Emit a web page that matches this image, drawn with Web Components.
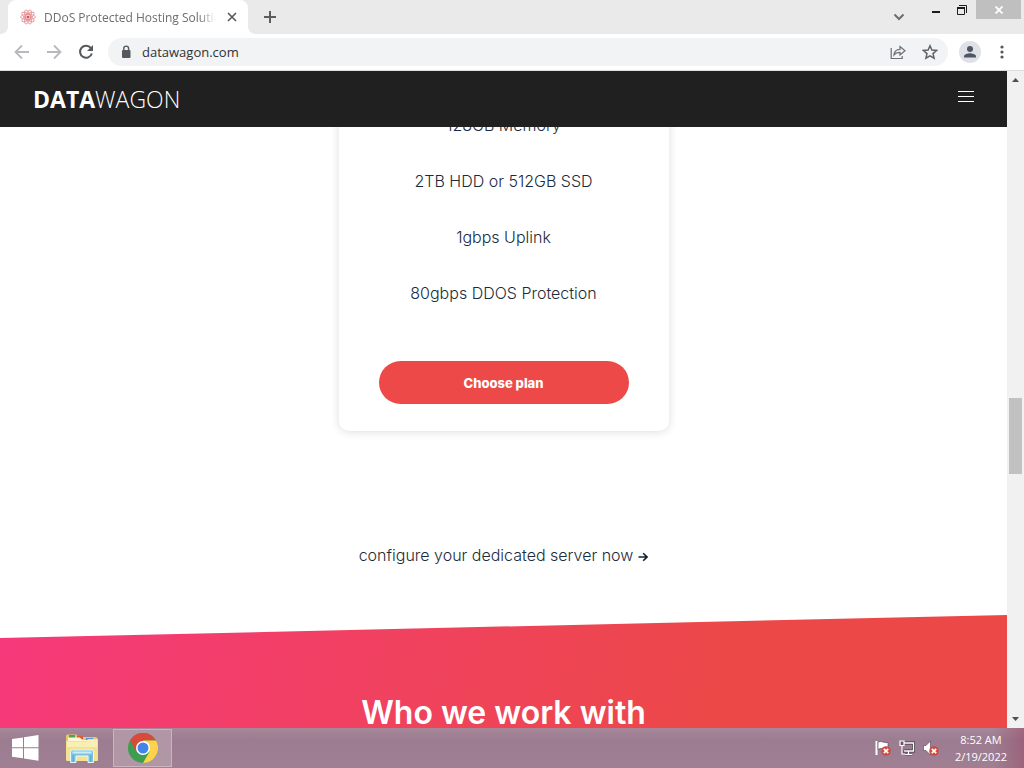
<!DOCTYPE html>
<html lang="en">
<head>
<meta charset="utf-8">
<meta name="viewport" content="width=device-width, initial-scale=1">
<title>DDoS Protected Hosting Solutions</title>
<style>
    body {
        margin: 0;
        height: 100vh;
        overflow: hidden;
        font-family: "Open Sans", "Noto Sans", sans-serif;
    }
</style>
</head>
<body>
<desktop-screen>
    <tab-strip>DDoS Protected Hosting Solutions</tab-strip>
    <address-bar url="datawagon.com"></address-bar>
    <web-page>
        <site-header slot="header"><b>DATA</b>WAGON</site-header>
        <plan-card>
            <span>128GB Memory</span>
            <span>2TB HDD or 512GB SSD</span>
            <span>1gbps Uplink</span>
            <span>80gbps DDOS Protection</span>
        </plan-card>
        <arrow-link>configure your dedicated server now</arrow-link>
        <slant-section>Who we work with</slant-section>
    </web-page>
    <task-bar></task-bar>
</desktop-screen>

<script>
class DesktopScreen extends HTMLElement {
    constructor() {
        super();
        this.attachShadow({ mode: 'open' });

        this.shadowRoot.innerHTML = `
              <style>
                    :host {
                        display: flex;
                        flex-direction: column;
                        height: 100%;
                        background-color: #ffffff;
                    }
              </style>
              <slot></slot>
        `;
    }
}

class TabStrip extends HTMLElement {
    constructor() {
        super();
        this.attachShadow({ mode: 'open' });

        this.shadowRoot.innerHTML = `
              <style>
                    :host {
                        display: flex;
                        align-items: flex-start;
                        flex: none;
                        height: 34px;
                        padding: 0 3px 0 8px;
                        background-color: #eaeaea;
                    }

                    button {
                        display: flex;
                        align-items: center;
                        justify-content: center;
                        padding: 0;
                        border: 0;
                        background: none;
                    }

                    .tab {
                        position: relative;
                        display: flex;
                        align-items: center;
                        gap: 8px;
                        box-sizing: border-box;
                        width: 240px;
                        height: 34px;
                        padding: 0 8px 0 12px;
                        border-radius: 8px 8px 0 0;
                        background-color: #ffffff;
                    }

                    /* the curved feet of the active tab */
                    .tab::before, .tab::after {
                        content: "";
                        position: absolute;
                        bottom: 0;
                        width: 8px;
                        height: 8px;
                    }

                    .tab::before {
                        left: -8px;
                        background: radial-gradient(circle at 0 0, transparent 8px, #ffffff 8px);
                    }

                    .tab::after {
                        right: -8px;
                        background: radial-gradient(circle at 100% 0, transparent 8px, #ffffff 8px);
                    }

                    .title {
                        flex: 1;
                        overflow: hidden;
                        white-space: nowrap;
                        font-size: 12px;
                        color: #6b6e72;
                        -webkit-mask-image: linear-gradient(to right, #000 90%, transparent);
                        mask-image: linear-gradient(to right, #000 90%, transparent);
                    }

                    .new {
                        width: 28px;
                        height: 34px;
                        margin-left: 8px;
                        margin-right: auto;
                    }

                    .search {
                        width: 28px;
                        height: 34px;
                        margin-right: 11px;
                    }

                    .minimize {
                        width: 24px;
                        height: 24px;
                    }

                    .restore {
                        width: 28px;
                        height: 19px;
                    }

                    .close {
                        width: 45px;
                        height: 19px;
                        background-color: #bfbfbf;
                    }
              </style>
              <div class="tab">
                <svg width="16" height="16" viewBox="0 0 16 16" fill="none" stroke="#e28a8f" stroke-width="0.8">
                  <ellipse cx="8" cy="8" rx="7.4" ry="2.6"/>
                  <ellipse cx="8" cy="8" rx="7.4" ry="2.6" transform="rotate(36 8 8)"/>
                  <ellipse cx="8" cy="8" rx="7.4" ry="2.6" transform="rotate(72 8 8)"/>
                  <ellipse cx="8" cy="8" rx="7.4" ry="2.6" transform="rotate(108 8 8)"/>
                  <ellipse cx="8" cy="8" rx="7.4" ry="2.6" transform="rotate(144 8 8)"/>
                  <circle cx="8" cy="8" r="1.6" fill="#d9505a" stroke="none"/>
                </svg>
                <span class="title"><slot></slot></span>
                <button aria-label="Close tab">
                  <svg width="16" height="16" viewBox="0 0 16 16" stroke="#54575b" stroke-width="1.6"><path d="M4 4l8 8M12 4l-8 8"/></svg>
                </button>
              </div>
              <button class="new" aria-label="New tab">
                <svg width="14" height="14" viewBox="0 0 14 14" stroke="#5a5d61" stroke-width="2"><path d="M7 1v12M1 7h12"/></svg>
              </button>
              <button class="search" aria-label="Search tabs">
                <svg width="12" height="12" viewBox="0 0 12 12" fill="none" stroke="#6b6e72" stroke-width="2"><path d="M1.500 3.500L6 8l4.500-4.500"/></svg>
              </button>
              <button class="minimize" aria-label="Minimize">
                <svg width="8" height="2"><rect width="8" height="2" fill="#1d1d1d"/></svg>
              </button>
              <button class="restore" aria-label="Restore">
                <svg width="10" height="10" viewBox="0 0 10 10" fill="none" stroke="#1d1d1d"><path d="M2 .5h7.500V8"/><path d="M.5 3h7v6.500h-7z"/><path d="M0 3h8" stroke-width="2"/></svg>
              </button>
              <button class="close" aria-label="Close">
                <svg width="8" height="8" viewBox="0 0 8 8" stroke="#ffffff" stroke-width="1.800"><path d="M.5 .5l7 7M7.500 .5l-7 7"/></svg>
              </button>
        `;
    }
}

class AddressBar extends HTMLElement {
    constructor() {
        super();
        this.attachShadow({ mode: 'open' });

        this.shadowRoot.innerHTML = `
              <style>
                    :host {
                        display: flex;
                        align-items: center;
                        gap: 4px;
                        flex: none;
                        box-sizing: border-box;
                        height: 37px;
                        padding: 0 8px;
                        border-bottom: 1px solid #dcdddf;
                        background-color: #ffffff;
                    }

                    button {
                        display: flex;
                        align-items: center;
                        justify-content: center;
                        width: 28px;
                        height: 28px;
                        padding: 0;
                        border: 0;
                        background: none;
                    }

                    .box {
                        display: flex;
                        align-items: center;
                        flex: 1;
                        height: 28px;
                        margin: 0 4px;
                        padding: 0 4px 0 10px;
                        gap: 4px;
                        border-radius: 14px;
                        background-color: #f1f3f4;
                    }

                    input {
                        flex: 1;
                        min-width: 0;
                        padding: 0 4px;
                        border: 0;
                        outline: 0;
                        background: none;
                        font: 13px "Open Sans", "Noto Sans", sans-serif;
                        color: #303236;
                    }
              </style>
              <button aria-label="Back">
                <svg width="16" height="16" viewBox="0 0 16 16" fill="none" stroke="#b7b9bc" stroke-width="1.800"><path d="M15 8H2M8 1.500L1.500 8 8 14.500"/></svg>
              </button>
              <button aria-label="Forward">
                <svg width="16" height="16" viewBox="0 0 16 16" fill="none" stroke="#b7b9bc" stroke-width="1.800"><path d="M1 8h13M8 1.500L14.500 8 8 14.500"/></svg>
              </button>
              <button aria-label="Reload">
                <svg width="16" height="16" viewBox="0 0 16 16" fill="none" stroke="#55585d" stroke-width="2"><path d="M12.900 4.200A6 6 0 1 0 13.800 9.500"/><path d="M15 1v6H9z" fill="#55585d" stroke="none"/></svg>
              </button>
              <div class="box">
                <svg width="16" height="16" viewBox="0 0 16 16"><rect x="4" y="6" width="8.500" height="8" rx="1" fill="#55585d"/><path d="M5.800 6.500V4.500a2.400 2.400 0 0 1 4.800 0v2" fill="none" stroke="#55585d" stroke-width="1.400"/></svg>
                <input type="text" aria-label="Address">
                <button aria-label="Share">
                  <svg width="16" height="16" viewBox="0 0 16 16" fill="none" stroke="#6b6e72" stroke-width="1.200"><path d="M1.200 4v10.500h11V12"/><path d="M4 11c.3-3.700 2.500-5.500 6-5.600V2.500l5 4.300-5 4.200V8.300c-3 0-4.600.8-6 2.700z"/></svg>
                </button>
                <button aria-label="Bookmark">
                  <svg width="16" height="16" viewBox="0 0 16 16" fill="none" stroke="#5f6368" stroke-width="1.500"><path d="M8 1.800l1.900 4.300 4.700.4-3.600 3.100 1.100 4.600L8 11.800l-4.100 2.400L5 9.600 1.400 6.500l4.700-.4z"/></svg>
                </button>
              </div>
              <button aria-label="Profile">
                <svg width="22" height="22" viewBox="0 0 22 22"><circle cx="11" cy="11" r="11" fill="#dee1e6"/><circle cx="11" cy="8" r="3" fill="#4d5566"/><path d="M5 16.500v-1.300c0-2 4-3 6-3s6 1 6 3v1.300z" fill="#4d5566"/></svg>
              </button>
              <button aria-label="Menu">
                <svg width="4" height="14" viewBox="0 0 4 14" fill="#54575b"><circle cx="2" cy="2" r="1.600"/><circle cx="2" cy="7" r="1.600"/><circle cx="2" cy="12" r="1.600"/></svg>
              </button>
        `;
    }

    connectedCallback() {
        this.shadowRoot.querySelector('input').value = this.getAttribute('url');
    }
}

class WebPage extends HTMLElement {
    constructor() {
        super();
        this.attachShadow({ mode: 'open' });

        this.shadowRoot.innerHTML = `
              <style>
                    :host {
                        display: flex;
                        flex: 1;
                        min-height: 0;
                        font-family: Inter, sans-serif;
                        color: #1c2b3a;
                    }

                    .page {
                        display: flex;
                        flex-direction: column;
                        flex: 1;
                        min-width: 0;
                        overflow: hidden;
                    }

                    main {
                        display: flex;
                        flex-direction: column;
                        align-items: center;
                        flex: 1;
                        min-height: 0;
                        overflow: hidden;
                    }

                    .scrollbar {
                        display: flex;
                        flex-direction: column;
                        align-items: center;
                        width: 17px;
                        background-color: #f1f1f1;
                    }

                    .scrollbar svg {
                        flex: none;
                    }

                    .before {
                        flex: 310;
                    }

                    .thumb {
                        flex: 76;
                        width: 13px;
                        background-color: #c1c1c1;
                    }

                    .after {
                        flex: 237;
                    }
              </style>
              <div class="page">
                <slot name="header"></slot>
                <main><slot></slot></main>
              </div>
              <div class="scrollbar">
                <svg width="17" height="17"><path d="M5 11l3.500-4 3.500 4z" fill="#505050"/></svg>
                <div class="before"></div>
                <div class="thumb"></div>
                <div class="after"></div>
                <svg width="17" height="17"><path d="M5 6l3.500 4L12 6z" fill="#505050"/></svg>
              </div>
        `;
    }
}

class SiteHeader extends HTMLElement {
    constructor() {
        super();
        this.attachShadow({ mode: 'open' });

        this.shadowRoot.innerHTML = `
              <style>
                    :host {
                        display: flex;
                        align-items: center;
                        justify-content: space-between;
                        flex: none;
                        height: 56px;
                        padding: 0 33px;
                        background-color: #202020;
                    }

                    a {
                        font: 300 23px "Open Sans", "Noto Sans", sans-serif;
                        color: #ffffff;
                        text-decoration: none;
                    }

                    ::slotted(b) {
                        font-weight: 700;
                    }

                    button {
                        display: flex;
                        padding: 0 0 4px;
                        border: 0;
                        background: none;
                    }
              </style>
              <a href="#"><slot></slot></a>
              <button aria-label="Open menu">
                <svg width="16" height="12" viewBox="0 0 16 12" stroke="#ffffff"><path d="M0 .5h16M0 5.500h16M0 10.500h16"/></svg>
              </button>
        `;
    }
}

class PlanCard extends HTMLElement {
    constructor() {
        super();
        this.attachShadow({ mode: 'open' });

        this.shadowRoot.innerHTML = `
              <style>
                    :host {
                        display: flex;
                        flex-direction: column;
                        flex: none;
                        box-sizing: border-box;
                        width: 330px;
                        margin-top: -30px;
                        padding: 0 40px 27px;
                        border-radius: 10px;
                        box-shadow: 0 1px 8px rgba(20, 20, 50, 0.14);
                        background-color: #ffffff;
                    }

                    ::slotted(span) {
                        font-size: 16px;
                        font-weight: 300;
                        line-height: 56px;
                        text-align: center;
                    }

                    button {
                        height: 43px;
                        margin-top: 40px;
                        border: 0;
                        border-radius: 22px;
                        background-color: #ee4949;
                        font: 800 13px Inter, sans-serif;
                        color: #ffffff;
                    }
              </style>
              <slot></slot>
              <button>Choose plan</button>
        `;
    }
}

class ArrowLink extends HTMLElement {
    constructor() {
        super();
        this.attachShadow({ mode: 'open' });

        this.shadowRoot.innerHTML = `
              <style>
                    :host {
                        flex: none;
                        margin: 112px 0 47px;
                        font-size: 16px;
                        font-weight: 300;
                        line-height: 25px;
                    }

                    a {
                        display: flex;
                        align-items: center;
                        gap: 5px;
                        color: inherit;
                        text-decoration: none;
                    }

                    svg {
                        padding-top: 3px;
                    }
              </style>
              <a href="#"><slot></slot>
                <svg width="10" height="10" viewBox="0 0 10 10" fill="none" stroke="#10202f" stroke-width="1.600"><path d="M.5 5h8M5.200 1.200L9 5 5.200 8.800"/></svg>
              </a>
        `;
    }
}

class SlantSection extends HTMLElement {
    constructor() {
        super();
        this.attachShadow({ mode: 'open' });

        this.shadowRoot.innerHTML = `
              <style>
                    :host {
                        display: block;
                        flex: none;
                        box-sizing: border-box;
                        align-self: stretch;
                        min-height: 300px;
                        padding-top: 78px;
                        background: linear-gradient(105deg, #f6397b, #ec4848 68%);
                        clip-path: polygon(0 23px, 100% 0, 100% 100%, 0 100%);
                    }

                    h2 {
                        margin: 0;
                        font-size: 32px;
                        font-weight: 600;
                        line-height: 40px;
                        text-align: center;
                        color: #ffffff;
                    }
              </style>
              <h2><slot></slot></h2>
        `;
    }
}

class TaskBar extends HTMLElement {
    constructor() {
        super();
        this.attachShadow({ mode: 'open' });

        this.shadowRoot.innerHTML = `
              <style>
                    :host {
                        display: flex;
                        align-items: center;
                        flex: none;
                        height: 40px;
                        padding-right: 17px;
                        background: linear-gradient(to right, transparent 97%, rgba(150, 60, 90, 0.4)), linear-gradient(#a78798, #9b7c91 30%, #a07f93);
                        color: #ffffff;
                    }

                    button {
                        display: flex;
                        align-items: center;
                        justify-content: center;
                        box-sizing: border-box;
                        height: 40px;
                        padding: 0;
                        border: 0;
                        background: none;
                    }

                    .start {
                        width: 50px;
                    }

                    .files {
                        width: 63px;
                    }

                    .chrome {
                        width: 59px;
                        height: 38px;
                        border: 1px solid #c9b5c0;
                        background-color: #b196a5;
                    }

                    .tray {
                        width: 24px;
                    }

                    .icons {
                        display: flex;
                        margin-left: auto;
                        margin-right: 12px;
                    }

                    .clock {
                        font-size: 11px;
                        line-height: 17px;
                        text-align: center;
                    }
              </style>
              <button class="start" aria-label="Start">
                <svg width="28" height="28" viewBox="0 0 28 28" fill="#ffffff"><path d="M1 5l11-1.600V13.300H1zM13 3.200L27.500 1v12.300H13zM1 14.300h11v10L1 22.700zM13 14.300h14.500V26.800L13 24.500z"/></svg>
              </button>
              <button class="files" aria-label="File Explorer">
                <svg width="34" height="30" viewBox="0 0 34 30">
                  <path d="M1 3q0-1.500 1.500-1.500h9L13 4h18q1.500 0 1.500 1.500V27H1z" fill="#e3c76e"/>
                  <path d="M4 2h6v3H4z" fill="#4da452"/><path d="M12 3h6v3h-6z" fill="#d65c3d"/><path d="M21 5h7v3h-7z" fill="#5797cd"/>
                  <path d="M3 4.500h12l2 2.500h14v3H3z" fill="#fff7d4"/>
                  <path d="M1 8h20l2-2h10v21q0 1-1 1H2q-1 0-1-1z" fill="#f3e290"/>
                  <path d="M2 9h19l2-2h9v7H2z" fill="#f9efb4"/>
                  <path d="M5.500 29.500V19q0-2 2-2h19q2 0 2 2v10.500H23V23H11v6.500z" fill="#7cc3e2" stroke="#e7f7ff"/>
                  <path d="M7.500 19.500h19" stroke="#c9effb" stroke-width="2"/>
                  <path d="M8.200 22v7M25.800 22v7" stroke="#4fa6d2"/>
                </svg>
              </button>
              <button class="chrome" aria-label="Google Chrome">
                <svg width="30" height="30" viewBox="0 0 30 30">
                  <circle cx="15" cy="15" r="15" fill="#3d9e51"/>
                  <path d="M15 15L2 7.500A15 15 0 0 1 28 7.500H15z" fill="#d84a3b"/>
                  <path d="M15 7.500h13A15 15 0 0 1 15 30l6.500-11.200z" fill="#fcd34a"/>
                  <path d="M2 7.500l6.500 11.300L15 15z" fill="#d84a3b"/>
                  <circle cx="15" cy="15" r="7" fill="#ffffff"/>
                  <circle cx="15" cy="15" r="5.500" fill="#4484ea"/>
                </svg>
              </button>
              <div class="icons">
                <button class="tray" aria-label="Action Center">
                  <svg width="16" height="16" viewBox="0 0 16 16"><path d="M1.500 1v14" stroke="#ffffff" stroke-width="2"/><path d="M3 2q2.500-1 5 0t5 .5v7q-3 1-5-.5T3 9.500z" fill="#ffffff" stroke="#544050" stroke-width=".6"/><circle cx="11" cy="11" r="4.800" fill="#cf4b40"/><path d="M8.800 8.800l4.400 4.400M13.200 8.800l-4.400 4.400" stroke="#ffffff" stroke-width="1.700"/></svg>
                </button>
                <button class="tray" aria-label="Network">
                  <svg width="16" height="16" viewBox="0 0 16 16" fill="none"><path d="M4 3h10.500v8H5M9.500 11v3M6 14.500h7" stroke="#433542" stroke-width="3"/><path d="M4 3h10.500v8H5M9.500 11v3M6 14.500h7" stroke="#ffffff" stroke-width="1.400"/><path d="M1 1h4v4.500H1zM3 5.500V14h3" fill="#6b5668" stroke="#ffffff" stroke-width="1.200"/></svg>
                </button>
                <button class="tray" aria-label="Volume">
                  <svg width="16" height="16" viewBox="0 0 16 16"><path d="M.5 5.500H3L7.500 1v14L3 10.500H.5z" fill="#ffffff" stroke="#544050" stroke-width=".6"/><circle cx="11" cy="11" r="4.800" fill="#cf4b40"/><path d="M8.800 8.800l4.400 4.400M13.200 8.800l-4.400 4.400" stroke="#ffffff" stroke-width="1.700"/></svg>
                </button>
              </div>
              <div class="clock">
                <div>8:52 AM</div>
                <div>2/19/2022</div>
              </div>
        `;
    }
}

customElements.define('desktop-screen', DesktopScreen);
customElements.define('tab-strip', TabStrip);
customElements.define('address-bar', AddressBar);
customElements.define('web-page', WebPage);
customElements.define('site-header', SiteHeader);
customElements.define('plan-card', PlanCard);
customElements.define('arrow-link', ArrowLink);
customElements.define('slant-section', SlantSection);
customElements.define('task-bar', TaskBar);
</script>
</body>
</html>
